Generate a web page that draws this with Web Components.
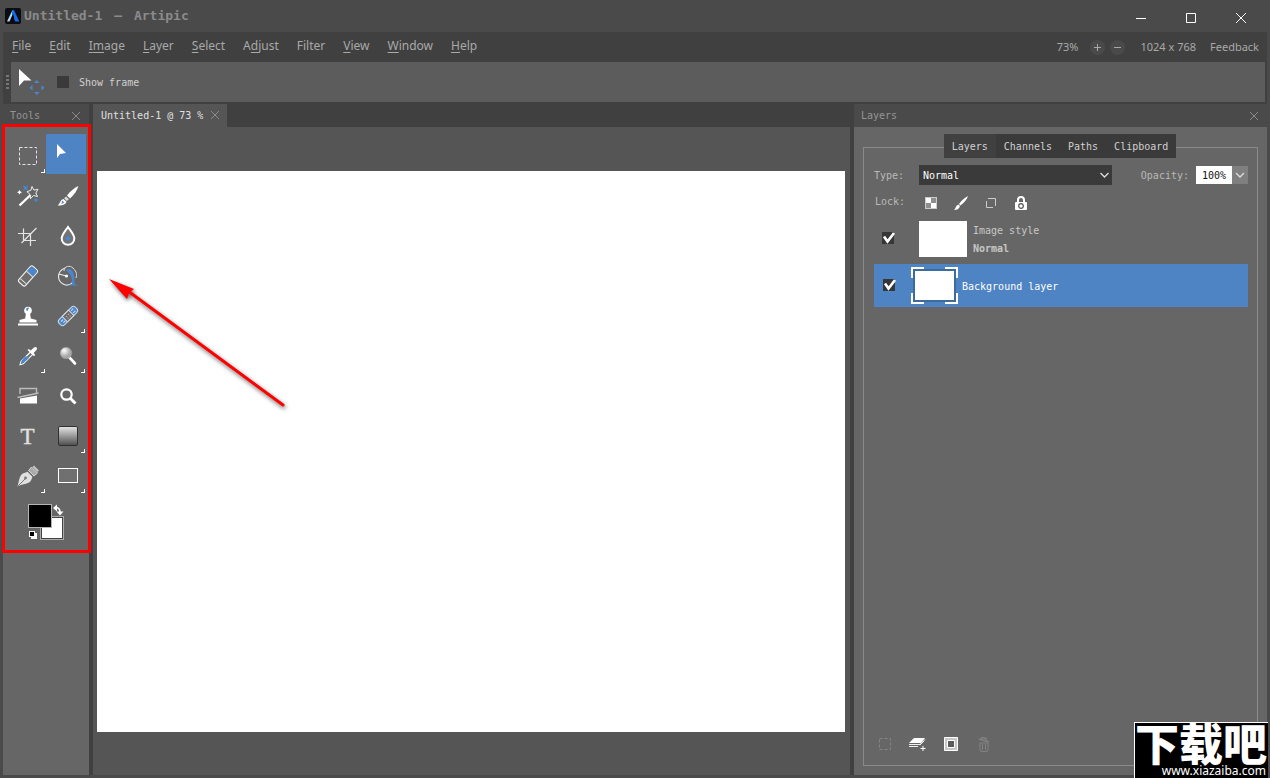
<!DOCTYPE html>
<html lang="en">
<head>
<meta charset="utf-8">
<title>Untitled-1 — Artipic</title>
<style>
  html, body { margin: 0; height: 100%; }
  body {
    --mono: "DejaVu Sans Mono", "Liberation Mono", monospace;
    --sans: "Noto Sans", "Open Sans", sans-serif;
    --frame: #4a4a4a;
    --dark: #404040;
    --panel: #666;
    --accent: #4e83c4;
    background: var(--frame);
    font: 10px/16px var(--mono);
    color: #c8c8c8;
    overflow: hidden;
  }
</style>
</head>
<body>
<artipic-app></artipic-app>
<script>
const BASE = `<style>
  *, *::before, *::after { box-sizing: border-box; }
  :host { box-sizing: border-box; }
  :host([hidden]) { display: none; }
  button, input, select { font: inherit; color: inherit; margin: 0; padding: 0; border: 0; background: none; border-radius: 0; }
  svg { display: block; }
</style>`;

function define(name, html) {
  const template = document.createElement('template');
  template.innerHTML = BASE + html;
  customElements.define(name, class extends HTMLElement {
    constructor() {
      super();
      this.attachShadow({ mode: 'open' }).append(template.content.cloneNode(true));
    }
  });
}

/* ---- small shared pieces ---- */

define('close-button', `
<style>
  :host { display: block; }
  button { display: block; color: #8a8a8a; }
</style>
<button type="button" aria-label="Close"><svg width="10" height="10" viewBox="0 0 10 10" fill="none" stroke="currentColor"><path d="M1 1l8 8M9 1l-8 8"/></svg></button>`);

define('tick-box', `
<style>
  :host { display: block; width: 14px; height: 14px; }
  label { display: grid; width: 12px; height: 12px; position: relative; }
  input { appearance: none; width: 12px; height: 12px; background: #363636; grid-area: 1 / 1; }
  svg { grid-area: 1 / 1; width: 14px; height: 12px; overflow: visible; pointer-events: none; }
  input:not(:checked) + svg { visibility: hidden; }
</style>
<label><input type="checkbox" checked aria-label="Layer visible"><svg viewBox="0 0 14 12" fill="none" stroke="#fff" stroke-width="2.6"><path d="M2 4.5L5.5 9.500L12 1"/></svg></label>`);

define('tool-button', `
<style>
  :host { display: block; width: 40px; height: 40px; }
  :host([active]) { background: var(--accent); }
  button { display: grid; width: 40px; height: 40px; }
  ::slotted(svg) { grid-area: 1 / 1; display: block; width: 40px; height: 40px; }
  .more { grid-area: 1 / 1; align-self: end; justify-self: end; width: 4px; height: 4px; margin: 0 1px 1px 0; border: solid #fff; border-width: 0 1px 1px 0; display: none; }
  :host([more]) .more { display: block; }
</style>
<button type="button"><slot></slot><span class="more"></span></button>`);

/* ---- window chrome ---- */

define('title-bar', `
<style>
  :host { display: flex; align-items: center; height: 32px; padding-left: 5px; }
  h1 { margin: 0 auto 0 3px; font: bold 13px/20px var(--mono); color: #8b8b8b; }
  .dash { display: inline-block; width: 16px; text-align: center; }
  button { width: 50px; height: 32px; display: grid; place-items: center; padding-top: 3px; color: #fff; }
  nav { display: flex; padding-right: 4px; }
</style>
<svg width="16" height="16" viewBox="0 0 16 16"><defs><linearGradient id="l" x2="0" y2="1"><stop stop-color="#7ff"/><stop offset="1" stop-color="#c9c7e8"/></linearGradient></defs><rect width="16" height="16" rx="2" fill="#0b0d12"/><path d="M7.500 2L2 13.500h2.500L8.300 5z" fill="url(#l)"/><path d="M7.500 2h1.500L14.300 13.500h-4L6.900 6z" fill="#1769e8"/><path d="M8 6l-2 5 2 1 1-3z" fill="#05070b"/></svg>
<h1>Untitled-1 <span class="dash">—</span> Artipic</h1>
<nav aria-label="Window">
  <button type="button" aria-label="Minimize"><svg width="10" height="10"><path d="M0 5.500h10" stroke="currentColor"/></svg></button>
  <button type="button" aria-label="Maximize"><svg width="10" height="10"><path d="M.5.5h9v9h-9z" fill="none" stroke="currentColor"/></svg></button>
  <button type="button" aria-label="Close"><svg width="10" height="10"><path d="M0 0l10 10M10 0L0 10" stroke="currentColor"/></svg></button>
</nav>`);

define('menu-bar', `
<style>
  :host { display: flex; align-items: center; justify-content: space-between; height: 30px; background: var(--dark); padding: 0 8px 0 9px; font: 12px/18px var(--sans); color: #a9a9a9; }
  nav { display: flex; gap: 18px; padding-bottom: 3px; }
  nav a { color: inherit; text-decoration: none; }
  u { text-underline-offset: 2px; }
  .status { display: flex; align-items: center; font-size: 11px; }
  .status button { width: 15px; height: 15px; border-radius: 50%; background: #4a4a4a; display: grid; place-items: center; }
  .zoom { margin-right: 12px; }
  .in { margin-right: 5px; }
  .out { margin-right: 15px; }
  .size { margin-right: 14px; }
  .status a { color: inherit; text-decoration: none; }
</style>
<nav aria-label="Main menu">
  <a href="#file"><u>F</u>ile</a><a href="#edit"><u>E</u>dit</a><a href="#image"><u>I</u><u>m</u>age</a><a href="#layer"><u>L</u>ayer</a><a href="#select"><u>S</u>elect</a><a href="#adjust">A<u>d</u>just</a><a href="#filter">Filter</a><a href="#view"><u>V</u>iew</a><a href="#window"><u>W</u>indow</a><a href="#help"><u>H</u>elp</a>
</nav>
<div class="status">
  <span class="zoom">73%</span>
  <button class="in" type="button" aria-label="Zoom in"><svg width="7" height="7"><path d="M0 3.500h7M3.500 0v7" stroke="currentColor"/></svg></button>
  <button class="out" type="button" aria-label="Zoom out"><svg width="7" height="7"><path d="M0 3.500h7" stroke="currentColor"/></svg></button>
  <span class="size">1024 x 768</span>
  <a href="#feedback">Feedback</a>
</div>`);

define('option-bar', `
<style>
  :host { display: flex; height: 42px; padding: 0 2px 2px 0; background: var(--dark); }
  .grip { width: 8px; display: grid; place-items: center; }
  .bar { flex: 1; display: flex; align-items: center; background: #5c5c5c; padding-left: 6px; }
  label { display: flex; align-items: center; gap: 10px; margin-left: 12px; color: #d0d0d0; }
  label span { padding-top: 2px; }
  input { appearance: none; width: 12px; height: 12px; background: #3a3a3a; }
</style>
<div class="grip"><svg width="4" height="16" fill="#777"><path d="M1 1h3v2H1zM1 5h3v2H1zM1 9h3v2H1zM1 13h3v2H1z"/></svg></div>
<div class="bar">
  <svg width="28" height="28" viewBox="0 0 28 28"><path d="M2 1v17l5-5.500h7.500z" fill="#fff"/><path d="M17 15l2.800-3 2.800 3zM17 24l2.800 3 2.800-3zM15.500 17v5.500l-3-2.800zM24.500 17v5.500l3-2.800z" fill="#4a86cc"/></svg>
  <label><input type="checkbox"><span>Show frame</span></label>
</div>`);

/* ---- dock panels ---- */

define('dock-panel', `
<style>
  :host { display: flex; flex-direction: column; min-height: 0; background: var(--panel); }
  header { display: flex; align-items: center; justify-content: space-between; height: 23px; padding: 0 8px 0 7px; background: var(--frame); color: #959595; }
  h2 { margin: 0; font: inherit; }
  slot[name] { display: contents; }
</style>
<header><h2><slot name="title"></slot></h2><close-button></close-button></header>
<slot></slot>`);

define('tool-palette', `
<style>
  :host { display: block; padding: 7px 3px; }
  .grid { display: grid; grid-template-columns: 40px 40px; }
  .swatches { display: grid; width: 40px; height: 40px; margin: 8px 0 0 19px; }
</style>
<div class="grid">
  <tool-button more><svg viewBox="0 0 40 40" role="img" aria-label="Marquee"><rect x="13.500" y="13.500" width="17" height="17" fill="none" stroke="#e4e4e4" stroke-dasharray="3 2"/></svg></tool-button>
  <tool-button active><svg viewBox="0 0 40 40" role="img" aria-label="Move"><path d="M11 10v14l3-4 6-1z" fill="#fff"/></svg></tool-button>
  <tool-button><svg viewBox="0 0 40 40" role="img" aria-label="Magic wand" fill="none"><path d="M13.500 31.500l11-10.500" stroke="#fff" stroke-width="2.400"/><path d="M26 12.500l2 3.600 4-.8-2.200 3.700 1.700 3.500-4-1-3 3.200-.6-4.500-3-2.500 4-1.400z" stroke="#eee"/><path d="M17 11.500l2.500 1 2.500-1-1 2.500 1 2.500-2.500-1-2.500 1 1-2.500zM30 24l1.200 1.500 1.800.5-1.800.8L30 28.500l-1-1.700-2-.8 2-.7z" fill="#4a86cc"/><path d="M13.500 16l1 1.500 1.500.7-1.500.7-1 1.600-1-1.600-1.500-.7 1.500-.7z" fill="#fff"/></svg></tool-button>
  <tool-button><svg viewBox="0 0 40 40" role="img" aria-label="Brush"><path d="M32.500 12c-4 1.500-8 5-11.500 9.500l3 3C28.500 20.500 31 16.500 32.500 12z" fill="#fff"/><path d="M20.200 22.500l2.700 2.700-2 1.800-2.800-2.800z" fill="#ddd"/><path d="M17.500 25l3 2.800c-.8 3-4.500 4.200-9 3.700 2.500-1.200 2.200-5.500 6-6.500z" fill="#fff"/><path d="M16 26.500l2.500 2-3 1.500z" fill="#5b8fc8"/></svg></tool-button>
  <tool-button><svg viewBox="0 0 40 40" role="img" aria-label="Crop" fill="none" stroke="#e4e4e4" stroke-width="1.200"><path d="M17.500 14.500v12h12.500M12 19.500h12.500V32M15.500 29l15-15"/></svg></tool-button>
  <tool-button><svg viewBox="0 0 40 40" role="img" aria-label="Blur"><path d="M22 13c3.500 5 6.300 8 6.300 11.500a6.300 6.300 0 0 1-12.600 0C15.700 21 18.500 18 22 13z" fill="#737373" stroke="#fff" stroke-width="2"/><circle cx="22" cy="24.500" r="2.300" fill="#4a86cc"/></svg></tool-button>
  <tool-button><svg viewBox="0 0 40 40" role="img" aria-label="Eraser"><g transform="translate(22 22) rotate(-48)"><rect x="-10.500" y="-4.500" width="21" height="9" rx="2" fill="#6d6d6d" stroke="#eee" stroke-width="1.200"/><path d="M3-4h5.500q1.500 0 1.500 1.500v5Q10 4 8.500 4H3z" fill="#4a86cc"/><path d="M2.500-4v8M-7-4v8" stroke="#ddd"/></g></svg></tool-button>
  <tool-button><svg viewBox="0 0 40 40" role="img" aria-label="Fill" fill="none"><path d="M19 14q-7 3-6.500 9t7 8q5 .5 7.500-3" stroke="#e6e6e6" stroke-width="1.200"/><path d="M18 17c0-5 6-6 9-3 4 4 4 7 3 10" stroke="#ddd"/><path d="M13 20l7 2" stroke="#eee" stroke-width="1.200"/><circle cx="20.500" cy="22" r="1.600" fill="#fff"/><path d="M20 16c5-3 9 1 8.500 14l4 1.500H21.500l4.500-1.500c.5-7-1.500-9-6-14z" fill="#4a86cc"/></svg></tool-button>
  <tool-button><svg viewBox="0 0 40 40" role="img" aria-label="Stamp"><circle cx="22" cy="16.500" r="3.800" fill="#fff"/><path d="M20 19h4l.8 5.500 5.700 1.500v2.500h-17V26l5.700-1.500zM12 29.500h20v2H12z" fill="#fff"/><path d="M20 16a2.500 2.500 0 0 1 3-2.300L21.500 17z" fill="#4a86cc"/></svg></tool-button>
  <tool-button more><svg viewBox="0 0 40 40" role="img" aria-label="Heal"><g transform="translate(22 22) rotate(-45)"><rect x="-11.500" y="-3.800" width="23" height="7.600" rx="3" fill="#4a86cc" stroke="#ccd9e8"/><path d="M-4.500-3.800h9v7.600h-9z" fill="#6b6b6b" stroke="#ddd"/><path d="M-9-1h3M-8 1.500h3M6-1.500h3M6 1.500h3M-2-1h1M1-1h1M-2 1.500h1M1 1.500h1" stroke="#ddd"/></g></svg></tool-button>
  <tool-button more><svg viewBox="0 0 40 40" role="img" aria-label="Eyedropper"><path d="M24.500 18L15 27.500l-.9 3.200 3.200-.9L26.800 20.300z" fill="#6b6b6b" stroke="#fff" stroke-width="1.200"/><path d="M21.500 22.500h-2.500L15.500 27l-1 3 3-1 5-4.500z" fill="#4a86cc"/><path d="M21.500 16l1.200-1 2 1.600 3.300-3c2-1.800 4 .4 2.500 2.400L27.700 19l1.500 2-1.200 1.300z" fill="#fff"/></svg></tool-button>
  <tool-button more><svg viewBox="0 0 40 40" role="img" aria-label="Dodge"><defs><radialGradient id="d" cx=".35" cy=".3"><stop stop-color="#fff"/><stop offset="1" stop-color="#aaa"/></radialGradient></defs><path d="M23 23l6 6.500" stroke="#fff" stroke-width="2.600" stroke-linecap="round"/><circle cx="20" cy="19" r="5.800" fill="url(#d)" stroke="#999" stroke-width=".6"/></svg></tool-button>
  <tool-button><svg viewBox="0 0 40 40" role="img" aria-label="Slice"><path d="M14 20v-5.500h16.500V19" fill="none" stroke="#bbb" stroke-width="1.400"/><path d="M14 24.500l17-3v8H14z" fill="#fff"/><path d="M11.500 23.500l21-4.500" stroke="#bbb" stroke-width="1.600"/></svg></tool-button>
  <tool-button><svg viewBox="0 0 40 40" role="img" aria-label="Zoom" fill="none" stroke="#fff"><circle cx="20.500" cy="20.500" r="5.200" stroke-width="2.200"/><path d="M24.500 24.500l5 5" stroke-width="3"/></svg></tool-button>
  <tool-button><svg viewBox="0 0 40 40" role="img" aria-label="Text" fill="#e0e0e0" stroke="#e0e0e0" stroke-width=".4"><text x="21.500" y="30" text-anchor="middle" font-family="Liberation Serif, serif" font-size="23">T</text></svg></tool-button>
  <tool-button more><svg viewBox="0 0 40 40" role="img" aria-label="Gradient"><defs><linearGradient id="g" x2="0" y2="1"><stop stop-color="#e6e6e6"/><stop offset="1" stop-color="#4c4c4c"/></linearGradient></defs><rect x="12.500" y="12.500" width="19" height="19" rx="1.500" fill="url(#g)" stroke="#303030"/></svg></tool-button>
  <tool-button more><svg viewBox="0 0 40 40" role="img" aria-label="Pen"><path d="M11.500 32.500c1.500-5 1.500-9.500 4.500-12.500 2-1.500 4-1.500 5.500-2.300l5 5c-1 2-1 4-3 5.500-3.500 2-7.500 1.800-12 4.300z" fill="#e0e0e0"/><path d="M11.800 32.200l8-8" stroke="#777"/><circle cx="19.500" cy="24" r="1.400" fill="#777"/><path d="M22.500 16.500l3-3.500 6 6-3.500 3z" fill="#aaa" stroke="#d8d8d8"/><path d="M26.500 13l1.500-1.500 5 5-1.500 1.500z" fill="#c4c4c4"/></svg></tool-button>
  <tool-button more><svg viewBox="0 0 40 40" role="img" aria-label="Rectangle"><rect x="12.500" y="14.500" width="19" height="14" fill="#707070" stroke="#fff"/></svg></tool-button>
</div>
<div class="swatches"><svg width="40" height="40" viewBox="0 0 40 40" role="img" aria-label="Foreground and background colors"><rect x="15.500" y="14.500" width="23" height="23" fill="#fff" stroke="#aaa"/><rect x="16.500" y="15.500" width="21" height="21" fill="#fff" stroke="#444"/><rect x="3.500" y="2.500" width="23" height="23" fill="#000" stroke="#b5b5b5"/><rect x="6" y="31" width="6" height="6" fill="#fff"/><rect x="4" y="29" width="6" height="6" fill="#fff"/><rect x="5" y="30" width="4" height="4" fill="#000"/><path d="M31 5.500q4 .5 4 4.500" fill="none" stroke="#fff" stroke-width="1.600"/><path d="M28 6l4-3.500v7zM31.500 9.500h7L35 13.500z" fill="#fff"/></svg></div>`);

define('document-view', `
<style>
  :host { display: flex; flex-direction: column; min-width: 0; min-height: 0; background: #555; }
  header { display: flex; height: 23px; background: var(--dark); }
  .tab { display: flex; align-items: center; gap: 7px; padding: 0 7px 0 8px; background: #555; color: #e0e0e0; height: 23px; }
  .tab button { color: inherit; padding-top: 1px; }
  .tab close-button { padding-bottom: 1px; }
  .paper { flex: 1; margin: 44px 5px 43px 4px; background: #fff; }
</style>
<header><div class="tab"><button type="button">Untitled-1 @ 73 %</button><close-button></close-button></div></header>
<div class="paper" role="img" aria-label="Canvas"></div>`);

define('layer-row', `
<style>
  :host { display: flex; align-items: center; }
  .text { display: flex; flex-direction: column; gap: 2px; min-width: 0; padding: 2px 0 0 1px; }
</style>
<tick-box></tick-box><slot name="thumb"></slot><div class="text"><slot></slot></div>`);

define('layers-view', `
<style>
  :host { flex: 1; display: flex; flex-direction: column; min-height: 0; padding: 7px 9px 9px; }
  .tabs { display: flex; align-self: center; height: 24px; margin-bottom: -11px; background: #3a3a3a; position: relative; margin-left: -1px; }
  .tabs button { padding: 2px 8px 0; color: #d0d0d0; }
  .tabs .on { background: #404040; }
  .box { flex: 1; display: flex; flex-direction: column; border: 1px solid #8a8a8a; padding: 17px 9px 12px 10px; }
  .fields { display: flex; align-items: center; height: 20px; color: #b9b9b9; }
  .fields label { padding-top: 2px; }
  .fields .type { width: 45px; }
  .select { display: grid; flex: 0 1 193px; margin-right: auto; background: #3a3a3a; height: 20px; color: #fff; align-items: center; }
  select { appearance: none; grid-area: 1 / 1; padding: 2px 4px 0; height: 20px; outline: 0; }
  .select svg { grid-area: 1 / 1; justify-self: end; margin-right: 2px; pointer-events: none; }
  .opacity { margin-right: 7px; }
  input { width: 36px; height: 18px; background: #fff; color: #111; text-align: center; }
  .drop { width: 16px; height: 18px; background: #7f7f7f; display: grid; place-items: center; }
  .locks { display: flex; align-items: center; height: 16px; margin: 10px 0 9px; color: #b9b9b9; }
  .locks span { width: 44px; padding: 0 0 2px 1px; }
  .locks button { width: 26px; height: 16px; display: grid; place-items: center; margin-right: 4px; }
  .style { height: 38px; padding-left: 8px; color: #c6c6c6; }
  .style .thumb { width: 48px; height: 36px; background: #fff; margin: 0 5px 0 23px; }
  .bg { height: 43px; margin-top: 6px; padding-left: 9px; background: var(--accent); color: #fff; }
  .bg svg { margin: 0 3px 0 14px; }
  footer { margin-top: auto; display: flex; align-items: center; gap: 15px; padding-left: 2px; }
  footer button { width: 18px; height: 18px; display: grid; place-items: center; }
</style>
<div class="tabs" role="tablist"><button class="on" role="tab">Layers</button><button role="tab">Channels</button><button role="tab">Paths</button><button role="tab">Clipboard</button></div>
<div class="box">
  <div class="fields">
    <label class="type" for="type">Type:</label>
    <div class="select"><select id="type"><option>Normal</option></select><svg width="11" height="8" fill="none" stroke="#ddd" stroke-width="1.300"><path d="M1.500 2l4 4 4-4"/></svg></div>
    <label class="opacity" for="opacity">Opacity:</label><input id="opacity" value="100%">
    <button class="drop" type="button" aria-label="Opacity slider"><svg width="10" height="8" fill="none" stroke="#ddd" stroke-width="1.300"><path d="M1 2l4 4 4-4"/></svg></button>
  </div>
  <div class="locks"><span>Lock:</span>
    <button type="button" aria-label="Lock transparency"><svg width="12" height="12"><path d="M0 0h12v12H0z" fill="#ccc"/><path d="M1 1h5v5H1zM6 6h5v5H6z" fill="#fff"/><path d="M6 1h5v5H6zM1 6h5v5H1z" fill="#8f8f8f"/></svg></button>
    <button type="button" aria-label="Lock pixels"><svg width="14" height="14" viewBox="0 0 14 14"><path d="M14 0C10 2 7 5 5 8l1.500 1.500C9.500 7 13 4 14 0zM4.500 8.500l1.500 1.500C5 13 3 14 0 14c2-1.500 1.500-4.500 4.500-5.500z" fill="#fff"/></svg></button>
    <button type="button" aria-label="Lock position"><svg width="12" height="12" fill="none" stroke="#ccc"><path d="M3 1.500h7.500V9M1.500 4v6.500H8"/></svg></button>
    <button type="button" aria-label="Lock all"><svg width="12" height="14" viewBox="0 0 12 14"><path d="M3 7V4q0-3 3-3t3 3v3" fill="none" stroke="#fff" stroke-width="2"/><rect y="6" width="12" height="8" rx="1" fill="#fff"/><circle cx="6" cy="10" r="2.300" fill="none" stroke="#555" stroke-width="1.200"/></svg></button>
  </div>
  <layer-row class="style"><div class="thumb" slot="thumb"></div><span>Image style</span><b>Normal</b></layer-row>
  <layer-row class="bg"><svg slot="thumb" width="47" height="37"><path d="M3 3h41v31H3z" fill="#fff"/><path d="M3 3h41v31H3z" fill="none" stroke="#3c6b9c" stroke-width="2"/><path d="M1 11V1h12M34 1h12v10M46 26v10H34M13 36H1V26" fill="none" stroke="#fff" stroke-width="2"/></svg><span>Background layer</span></layer-row>
  <footer>
    <button type="button" aria-label="Selection from layer"><svg width="12" height="12"><path d="M.5.5h11v11H.5z" fill="none" stroke="#858585" stroke-dasharray="3 2"/></svg></button>
    <button type="button" aria-label="New layer"><svg width="18" height="15" viewBox="0 0 18 15"><path d="M5 1h11l-4 5H0z" fill="#fff"/><path d="M0 7.500h11l5-5M0 9.500h9M11 8l4-4" fill="none" stroke="#eee"/><path d="M14 9v5M11.500 11.500h5" stroke="#fff"/></svg></button>
    <button type="button" aria-label="Add mask"><svg width="14" height="14"><path d="M.5.5h13v13H.5z" fill="#c8c8c8" stroke="#fff"/><path d="M3.500 3.500h7v7h-7z" fill="#5c5c5c" stroke="#fff"/></svg></button>
    <button type="button" aria-label="Delete layer"><svg width="12" height="15" viewBox="0 0 12 15" fill="none" stroke="#828282"><path d="M1 2l10 3M3 2l1-1.500 4 1V3" stroke-width="1.500"/><path d="M2 6h8v7l-1 1.500H3L2 13zM4.500 7v6M7.500 7v6"/></svg></button>
  </footer>
</div>`);

/* ---- overlays ---- */

define('site-mark', `
<style>
  :host { display: flex; flex-direction: column; width: 134px; height: 56px; background: #000; border: solid #fff; border-width: 1px 0 0 1px; color: #fff; }
  b { font: 900 44px/38px "Noto Sans CJK SC", sans-serif; }
  a { margin-top: auto; font: 12px/14px var(--sans); color: inherit; text-decoration: none; text-align: right; padding-right: 2px; }
</style>
<b lang="zh">下载吧</b><a href="#site">www.xiazaiba.com</a>`);

define('artipic-app', `
<style>
  :host { display: flex; flex-direction: column; height: 100vh; position: relative; }
  .work { flex: 1; min-height: 0; display: grid; grid-template-columns: 86px minmax(0, 1fr) 413px; gap: 4px; background: var(--dark); }
  .main { flex: 1; min-height: 0; display: flex; flex-direction: column; padding: 0 3px 3px; }
  .note { position: absolute; left: 2px; top: 124px; width: 89px; height: 429px; border: 3px solid #f00; pointer-events: none; }
  .arrow { position: absolute; left: 100px; top: 270px; pointer-events: none; filter: drop-shadow(1px 2px 2px rgba(0, 0, 0, .6)); }
  site-mark { position: absolute; right: 2px; bottom: 0; }
</style>
<title-bar></title-bar>
<div class="main">
  <menu-bar></menu-bar>
  <option-bar></option-bar>
  <div class="work">
    <dock-panel><span slot="title">Tools</span><tool-palette></tool-palette></dock-panel>
    <document-view></document-view>
    <dock-panel><span slot="title">Layers</span><layers-view></layers-view></dock-panel>
  </div>
</div>
<div class="note"></div>
<svg class="arrow" width="200" height="150" viewBox="0 0 200 150"><path d="M28 21l155 114" stroke="#f00" stroke-width="3" stroke-linecap="round"/><path d="M9 9l25 10-5 4-2 6z" fill="#f00"/></svg>
<site-mark></site-mark>`);
</script>
</body>
</html>
